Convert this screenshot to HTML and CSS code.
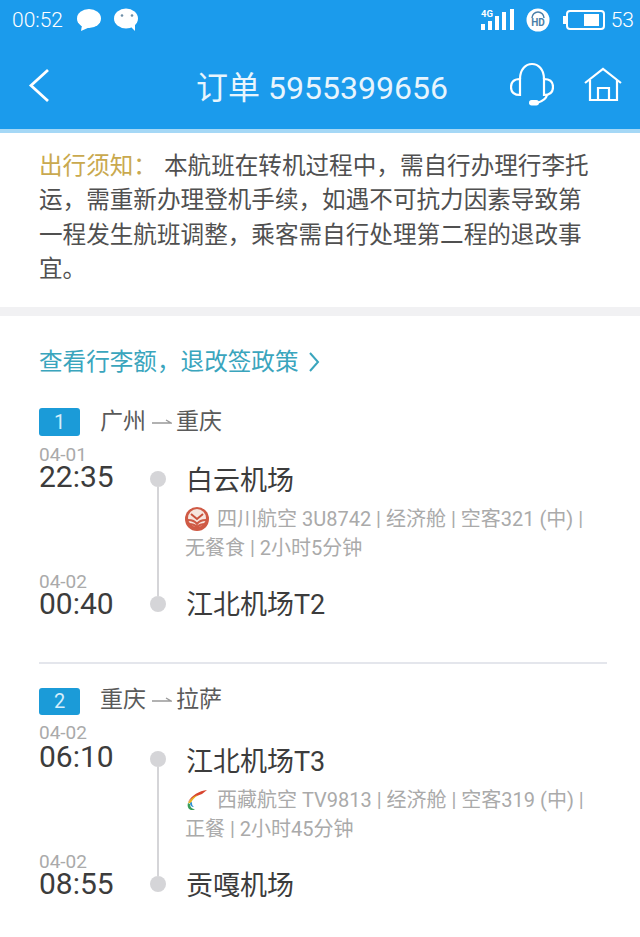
FILE: index.html

```html
<!DOCTYPE html>
<html lang="zh-CN">
<head>
    <meta charset="UTF-8">
    <title>订单 5955399656</title>
    <link rel="stylesheet" href="styles.css">
</head>
<body>
    <header class="top">
        <div class="status">
            <span class="clock">00:52</span>
            <svg width="24" height="24" viewBox="0 0 24 24"><ellipse cx="12" cy="10.500" rx="12" ry="9.500" fill="#fff"/><path d="M5 17l-1 6 9-4z" fill="#fff"/></svg>
            <svg width="24" height="24" viewBox="0 0 24 24"><ellipse cx="12" cy="10.500" rx="12" ry="10" fill="#fff"/><path d="M16 18l5 5 0-8z" fill="#fff"/><circle cx="8" cy="7.500" r="1.300" fill="#6d8fa8"/><circle cx="18" cy="7.500" r="1.300" fill="#6d8fa8"/></svg>
            <span class="status-right">
                <svg width="36" height="24" viewBox="0 0 36 24" fill="#fff"><rect x="1" y="16" width="4" height="6"/><rect x="8" y="13" width="4" height="9"/><rect x="15" y="8" width="4" height="14"/><rect x="22" y="4" width="4" height="18"/><rect x="30" y="1" width="4" height="21"/><text x="1" y="9" class="four-g">4G</text></svg>
                <svg class="hd" width="24" height="24" viewBox="0 0 24 24"><circle cx="12" cy="12" r="11.500" fill="#fff"/><text x="12" y="18" class="hd-text">HD</text><path d="M6 10a6 6 0 0 1 12 0" fill="none" stroke="#4a7fa8" stroke-width="1.500"/></svg>
                <svg class="battery" width="42" height="20" viewBox="0 0 42 20"><rect x="0" y="6" width="3" height="8" fill="#fff"/><rect x="4" y="1" width="37" height="18" rx="3" fill="none" stroke="#fff" stroke-width="2"/><rect x="21" y="4" width="15" height="12" fill="#fff"/></svg>
                <span class="level">53</span>
            </span>
        </div>
        <div class="nav">
            <svg width="22" height="35" viewBox="0 0 22 35"><path d="M20 2L3 17.500 20 33" fill="none" stroke="#fff" stroke-width="2.800"/></svg>
            <h1>订单 5955399656</h1>
            <svg class="service" width="44" height="46" viewBox="0 0 44 46" fill="none" stroke="#fff" stroke-width="2.200"><path d="M10 17C10 -3 34 -3 34 17"/><path d="M10 17C3 17 1 21 1 25c0 4 2 8 9 8z"/><path d="M34 17c7 0 9 4 9 8 0 4-2 8-9 8z"/><path d="M37 33c-1 5-7 7-10 8"/><rect x="19" y="38" width="10" height="5.500" rx="2.700" fill="#fff" stroke="none"/></svg>
            <svg width="38" height="36" viewBox="0 0 38 36" fill="none" stroke="#fff" stroke-width="2.200"><path d="M1 16L19 2l18 14"/><path d="M6 13v20h27V13"/><path d="M14 33V21h11v12"/></svg>
        </div>
    </header>

    <section class="notice">
        <p><span class="notice-title">出行须知：</span>本航班在转机过程中，需自行办理行李托运，需重新办理登机手续，如遇不可抗力因素导致第一程发生航班调整，乘客需自行处理第二程的退改事宜。</p>
    </section>

    <main class="detail">
        <a class="policy">查看行李额，退改签政策<svg width="12" height="22" viewBox="0 0 12 22"><path d="M2 2l8 9-8 9" fill="none" stroke="#3aa5bd" stroke-width="2"/></svg></a>

        <section class="leg">
            <div class="leg-head"><span class="num">1</span>广州<svg class="arrow" width="20" height="10" viewBox="0 0 20 10"><path d="M0 7h19l-5-3" fill="none" stroke="#999" stroke-width="1.300"/></svg>重庆</div>
            <div class="stop start">
                <div class="when"><small>04-01</small><b>22:35</b></div>
                <div class="rail"><i class="dot"></i><i class="line"></i></div>
                <div class="place">白云机场</div>
            </div>
            <div class="flight">
                <svg class="logo" width="24" height="24" viewBox="0 0 24 24"><circle cx="12" cy="12" r="12" fill="#cf5a45"/><circle cx="12" cy="11" r="9" fill="#f6e6df"/><path d="M6 7l6 5 6-5" fill="none" stroke="#c9523c" stroke-width="2"/><path d="M3 13c4 0 7 1 9 4 2-3 5-4 9-4M4 17c3 0 6 1 8 3 2-2 5-3 8-3" fill="none" stroke="#cf5a45" stroke-width="2"/></svg>四川航空 3U8742 | 经济舱 | 空客321 (中) |<br>无餐食 | 2小时5分钟
            </div>
            <div class="stop end">
                <div class="when"><small>04-02</small><b>00:40</b></div>
                <div class="rail"><i class="line"></i><i class="dot"></i></div>
                <div class="place">江北机场T2</div>
            </div>
        </section>

        <section class="leg second">
            <div class="leg-head"><span class="num">2</span>重庆<svg class="arrow" width="20" height="10" viewBox="0 0 20 10"><path d="M0 7h19l-5-3" fill="none" stroke="#999" stroke-width="1.300"/></svg>拉萨</div>
            <div class="stop start">
                <div class="when"><small>04-02</small><b>06:10</b></div>
                <div class="rail"><i class="dot"></i><i class="line"></i></div>
                <div class="place">江北机场T3</div>
            </div>
            <div class="flight">
                <svg class="logo" width="24" height="24" viewBox="0 0 24 24"><path d="M22 2C14 3 7 7 3 14c5-5 11-7 14-8z" fill="#d8452f"/><path d="M3 15c2-4 6-7 10-8-3 2-6 5-7 8z" fill="#e5b422"/><path d="M3 15c-1 3 0 6 3 7 2 0 3 0 4-1-3 0-5-2-5-5z" fill="#3a9e5a"/><path d="M5 15c0 2 1 4 4 4-2-1-2-3-2-5z" fill="#2e8fd0"/></svg>西藏航空 TV9813 | 经济舱 | 空客319 (中) |<br>正餐 | 2小时45分钟
            </div>
            <div class="stop end">
                <div class="when"><small>04-02</small><b>08:55</b></div>
                <div class="rail"><i class="line"></i><i class="dot"></i></div>
                <div class="place">贡嘎机场</div>
            </div>
        </section>
    </main>
</body>
</html>
```

FILE: styles.css

```css
* {
    box-sizing: border-box;
}
body {
    margin: 0;
    height: 937px;
    overflow: hidden;
    background-color: #fff;
    color: #333;
    font-family: Roboto, "Noto Sans CJK SC", sans-serif;
}
svg {
    display: block;
    flex: none;
}

/* blue header */
.top {
    height: 133px;
    background-color: #1b9bec;
    border-bottom: 4px solid #a5d8f6;
    color: #fff;
}
.status {
    display: flex;
    align-items: center;
    gap: 13px;
    height: 40px;
    padding: 0 6px 0 12px;
}
.clock {
    margin-right: 1px;
    font-size: 21px;
    font-weight: 300;
}
.status-right {
    display: flex;
    align-items: center;
    gap: 11px;
    margin-left: auto;
}
.four-g {
    font: bold 9.500px Roboto, sans-serif;
}
.hd {
    margin-left: -1px;
}
.hd-text {
    font: bold 10px Roboto, sans-serif;
    fill: #4a7fa8;
    text-anchor: middle;
}
.battery {
    margin-left: 2px;
}
.level {
    font-size: 21px;
    font-weight: 300;
    margin-left: -5px;
}
.nav {
    display: flex;
    align-items: center;
    height: 90px;
    padding: 0 18px 0 28px;
}
.nav h1 {
    flex: 1;
    margin: 0;
    padding-left: 84px;
    font-size: 32px;
    font-weight: 400;
    text-align: center;
    color: #e8f5fd;
    white-space: nowrap;
}
.service {
    margin-right: 30px;
}

.notice {
    height: 183px;
    padding: 16px 49px 0 39px;
    border-bottom: 9px solid #f1f1f3;
    font-size: 23.600px;
    line-height: 34.400px;
    color: #505050;
}
.notice p {
    margin: 0;
}
.notice-title {
    color: #c9a94f;
    margin-right: 7px;
}

.detail {
    padding: 0 33px 0 39px;
}
.policy {
    display: flex;
    align-items: center;
    gap: 9px;
    height: 34px;
    margin-top: 27px;
    font-size: 23.600px;
    color: #3aa5bd;
}
.policy svg {
    margin-top: 4px;
}

.leg {
    margin-top: 29px;
}
.leg.second {
    margin-top: 42px;
    padding-top: 20px;
    border-top: 2px solid #e4e6ec;
}
.leg-head {
    display: flex;
    align-items: flex-start;
    height: 30px;
    font-size: 23px;
    line-height: 32px;
    color: #5a5a5a;
}
.num {
    width: 41px;
    height: 28px;
    margin-top: 2px;
    margin-right: 20px;
    border-radius: 3px;
    background-color: #1b9bd8;
    color: #d5eefb;
    font-size: 20px;
    line-height: 28px;
    text-align: center;
}
.second .num {
    height: 27px;
    margin-top: 4px;
    line-height: 27px;
}
.arrow {
    margin: 10px 4px 0 6px;
}

/* stops and the line between them */
.stop {
    display: flex;
}
.stop.start {
    height: 49px;
    margin-top: 9px;
}
.second .stop.start {
    margin-top: 11px;
}
.stop.end {
    height: 48px;
}
.when {
    display: flex;
    flex-direction: column;
    width: 110px;
}
.when small {
    height: 20px;
    font-size: 19px;
    line-height: 20px;
    color: #aaa;
}
.second .start small {
    margin-top: -2px;
    margin-bottom: 2px;
}
.when b {
    height: 24px;
    font-size: 30px;
    font-weight: 400;
    line-height: 24px;
    color: #3c3c3c;
}
.rail {
    display: flex;
    flex-direction: column;
    align-items: center;
    width: 18px;
    margin-right: 19px;
}
.start .rail {
    padding-top: 26px;
}
.dot {
    flex: none;
    width: 16px;
    height: 16px;
    border-radius: 50%;
    background-color: #d5d5d8;
}
.line {
    width: 2px;
    background-color: #d5d5d8;
}
.start .line {
    flex: 1;
}
.end .line {
    height: 24px;
}
.place {
    font-size: 27px;
    line-height: 34px;
    color: #3c3c3c;
    white-space: nowrap;
}
.start .place {
    padding-top: 19px;
}
.end .place {
    padding-top: 16px;
}
.second .start .place {
    padding-top: 20px;
}
.second .end .place {
    padding-top: 17px;
}
.flight {
    height: 78px;
    margin-left: 118px;
    padding: 11px 0 0 26px;
    border-left: 2px solid #d5d5d8;
    font-size: 20px;
    line-height: 29px;
    color: #aaa;
    white-space: nowrap;
}
.second .flight {
    padding-top: 12px;
}
.logo {
    display: inline-block;
    margin-right: 8px;
    vertical-align: -5px;
}
```
